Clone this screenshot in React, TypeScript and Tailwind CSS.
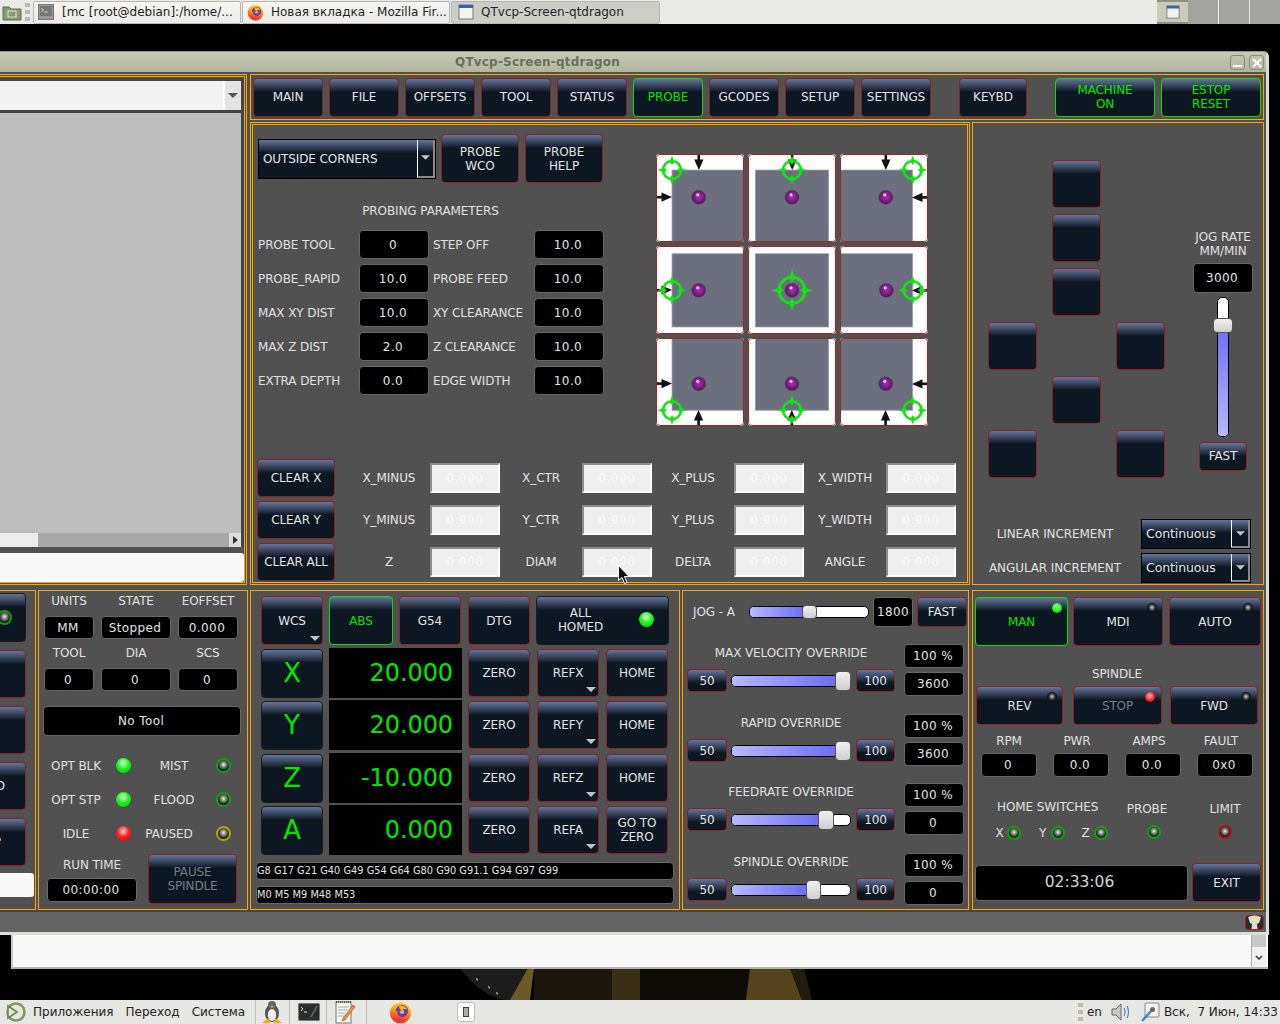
import React from "react";

type P = { className?: string; children?: React.ReactNode };

function Btn({ className = "", children, green, dark }: P & { green?: boolean; dark?: boolean }) {
  const tone = green
    ? "border-[#10d810] text-[#00e800]"
    : dark
    ? "border-[#1c1c1c] text-[#e4e4e4]"
    : "border-[#8c2024] text-[#e4e4e4]";
  return (
    <div
      className={`relative flex shrink-0 items-center justify-center rounded-[4px] border bg-[linear-gradient(#66759a,#0d1722_13px)] text-center text-[12px] leading-[14px] ${tone} ${className}`}
    >
      {children}
    </div>
  );
}

function Field({ className = "", children }: P) {
  return (
    <div
      className={`flex shrink-0 items-center justify-center rounded-[4px] border border-[#686868] bg-black pr-[2px] text-[12px] tracking-[0.4px] text-[#e4e4e4] ${className}`}
    >
      {children}
    </div>
  );
}

function Arrow({ className = "" }: P) {
  return (
    <svg viewBox="0 0 10 5" className={`absolute h-[5px] w-[10px] ${className}`}>
      <polygon points="0,0 10,0 5,5" fill="#c4c4c4" />
    </svg>
  );
}

function Led({ className = "", color = "off", ring = "#0fa00f" }: P & { color?: "off" | "green" | "red"; ring?: string }) {
  const bg =
    color === "green"
      ? "bg-[radial-gradient(circle_at_48%_35%,#d8ffd8,#22f022_45%,#00c400)]"
      : color === "red"
      ? "bg-[radial-gradient(circle_at_48%_35%,#ffd8d8,#ff2020_45%,#d00000)]"
      : "bg-[radial-gradient(circle_at_50%_42%,#f4f4f4,#a0a0a0_22%,#505050_48%,#161616_68%)]";
  return (
    <div
      className={`shrink-0 rounded-full ${color === "off" ? "border-2" : ""} ${bg} ${className}`}
      style={color === "off" ? { borderColor: ring } : undefined}
    />
  );
}

function Panel({ className = "", children }: P) {
  return <div className={`shrink-0 border border-[#ffa500] ${className}`}>{children}</div>;
}

function HSlider({ pos, w = "w-[16px]", h = "h-[20px]" }: { pos: number; w?: string; h?: string }) {
  return (
    <div className="relative h-[12px] w-[120px] shrink-0 rounded-[5px] border border-black bg-white">
      <div className="h-full rounded-[4px] bg-[linear-gradient(90deg,#b8b8ff,#6a6af4)]" style={{ width: pos + 4 }} />
      <div
        className={`absolute top-1/2 -translate-y-1/2 rounded-[4px] border border-[#555] bg-[linear-gradient(#f0f0f0,#cfcfcf)] ${w} ${h}`}
        style={{ left: pos - 1 }}
      />
    </div>
  );
}

function Combo({ className = "", children, small }: P & { small?: boolean }) {
  return (
    <div className={`flex shrink-0 border border-black bg-[linear-gradient(#66759a,#0d1722_13px)] text-[#e4e4e4] ${className}`}>
      <div className="flex flex-1 items-center pl-[4px]">{children}</div>
      <div className={`relative flex items-center justify-center border-b-2 border-l border-r-2 border-b-[#8a8a8a] border-l-white border-r-[#8a8a8a] ${small ? "w-[19px]" : "w-[18px]"}`}>
        <svg viewBox="0 0 10 5" className="h-[5px] w-[9px]">
          <polygon points="0,0 10,0 5,5" fill="#c4c4c4" />
        </svg>
      </div>
    </div>
  );
}

const G = "#12e412";

function ProbeArrow({ x, y, dir }: { x: number; y: number; dir: "d" | "u" | "r" | "l" }) {
  const rot = { d: 0, u: 180, r: -90, l: 90 }[dir];
  return (
    <g transform={`translate(${x} ${y}) rotate(${rot})`}>
      <rect x="-1.2" y="0" width="2.6" height="9" fill="#111" />
      <polygon points="-4.5,5.5 4.8,5.5 0.2,16" fill="#111" />
    </g>
  );
}

function Target({ x, y, big }: { x: number; y: number; big?: boolean }) {
  const r = big ? 13 : 9;
  const o = big ? 21 : 14.5;
  const i = big ? 8 : 5;
  const a = big ? 3.5 : 2.8;
  const t = big ? 2.4 : 2;
  return (
    <g>
      <circle cx={x} cy={y} r={r} fill="none" stroke={G} strokeWidth={big ? 3 : 2.6} />
      <polygon fill={G} points={`${x - a},${y - r} ${x + a},${y - r} ${x},${y - i}`} />
      <polygon fill={G} points={`${x - a},${y + r} ${x + a},${y + r} ${x},${y + i}`} />
      <polygon fill={G} points={`${x - r},${y - a} ${x - r},${y + a} ${x - i},${y}`} />
      <polygon fill={G} points={`${x + r},${y - a} ${x + r},${y + a} ${x + i},${y}`} />
      <polygon fill={G} points={`${x - t},${y - r} ${x + t},${y - r} ${x},${y - o}`} />
      <polygon fill={G} points={`${x - t},${y + r} ${x + t},${y + r} ${x},${y + o}`} />
      <polygon fill={G} points={`${x - r},${y - t} ${x - r},${y + t} ${x - o},${y}`} />
      <polygon fill={G} points={`${x + r},${y - t} ${x + r},${y + t} ${x + o},${y}`} />
    </g>
  );
}

type Cell = {
  rect: [number, number, number, number];
  ball: [number, number];
  target: [number, number];
  big?: boolean;
  arrows: [number, number, "d" | "u" | "r" | "l"][];
};

const cells: Cell[] = [
  { rect: [16, 16, 72, 72], ball: [42.7, 43.3], target: [16, 16], arrows: [[42.7, 0, "d"], [0, 43.3, "r"]] },
  { rect: [7.3, 16, 73.4, 72], ball: [44, 43.3], target: [44, 16], arrows: [[44, 0, "d"]] },
  { rect: [0, 16, 72.7, 72], ball: [45.7, 43.3], target: [72.7, 16], arrows: [[45.7, 0, "d"], [88, 43.3, "l"]] },
  { rect: [16, 7.7, 72, 73.3], ball: [42.7, 44.3], target: [16, 44.3], arrows: [[0, 44.3, "r"]] },
  { rect: [7.3, 7.7, 73.4, 73.3], ball: [44, 44.3], target: [44, 44.3], big: true, arrows: [] },
  { rect: [0, 7.7, 72.7, 73.3], ball: [46.3, 44.3], target: [72.7, 44.3], arrows: [[88, 44.3, "l"]] },
  { rect: [16, 0, 72, 72.3], ball: [42.7, 45.7], target: [16, 72.3], arrows: [[0, 45.7, "r"], [42.7, 88, "u"]] },
  { rect: [7.3, 0, 73.4, 72.3], ball: [44, 45.7], target: [44, 72.3], arrows: [[44, 88, "u"]] },
  { rect: [0, 0, 72.7, 72.3], ball: [45.7, 45.7], target: [72.7, 72.3], arrows: [[88, 45.7, "l"], [45.7, 88, "u"]] },
];

function ProbeCell({ c, i }: { c: Cell; i: number }) {
  const id = `ball${i}`;
  const clip = `clip${i}`;
  return (
    <svg viewBox="0 0 88 88" className="h-[88px] w-[88px]">
      <defs>
        <radialGradient id={id} cx="50%" cy="45%" r="55%">
          <stop offset="0" stopColor="#a83ab0" />
          <stop offset="0.65" stopColor="#7a1a84" />
          <stop offset="1" stopColor="#40204a" />
        </radialGradient>
        <clipPath id={clip}>
          <rect x="0" y="0" width="88" height="88" rx="3" />
        </clipPath>
      </defs>
      <g clipPath={`url(#${clip})`}>
        <rect width="88" height="88" fill="#fff" />
        <rect x={c.rect[0]} y={c.rect[1]} width={c.rect[2]} height={c.rect[3]} fill="#6c707e" stroke="#a4a8b4" strokeWidth="0.8" />
        <circle cx={c.ball[0]} cy={c.ball[1]} r="7" fill={`url(#${id})`} stroke="#4c4c58" strokeWidth="0.6" />
        <circle cx={c.ball[0] - 1} cy={c.ball[1] - 2.5} r="1.5" fill="#f0d0f0" />
        {c.arrows.map((a, k) => (
          <ProbeArrow key={k} x={a[0]} y={a[1]} dir={a[2]} />
        ))}
        <Target x={c.target[0]} y={c.target[1]} big={c.big} />
      </g>
      <rect x="0.5" y="0.5" width="87" height="87" rx="3" fill="none" stroke="#a82020" />
    </svg>
  );
}

function Firefox({ className = "", id }: P & { id: string }) {
  return (
    <svg viewBox="0 0 24 24" className={className}>
      <defs>
        <linearGradient id={id} x1="0.6" y1="0" x2="0.3" y2="1">
          <stop offset="0" stopColor="#ffd81e" />
          <stop offset="0.45" stopColor="#ff8a1a" />
          <stop offset="1" stopColor="#e8263c" />
        </linearGradient>
      </defs>
      <circle cx="12" cy="12.5" r="11" fill={`url(#${id})`} />
      <circle cx="13.5" cy="10.5" r="6.5" fill="#5a40c4" />
      <path d="M3 7 C2 14 6 21 13 21 C18 21 22 17 22 13 C20 16 17 18 13 17 C9 16 8 13 9 11 C7 11 5 9 6 5 C5 5 4 6 3 7 Z" fill={`url(#${id})`} />
      <path d="M11 5 C14 4 18 6 19 9 C17 8 15 8 14 9 C16 10 17 12 15 13 C13 14 11 13 11 11 C12 11 13 10 12 9 C11 8 10 7 11 5 Z" fill="#ffb21e" />
    </svg>
  );
}

function Task({ className = "", children, active }: P & { active?: boolean }) {
  return (
    <div
      className={`flex h-[23px] items-center rounded-[2px] border border-[#b8b8b2] pl-[4px] text-[12px] text-[#222] ${
        active ? "bg-[#cdcdc8]" : "bg-[linear-gradient(#f6f6f3,#ecebe7)]"
      } ${className}`}
    >
      {children}
    </div>
  );
}

function SmallLed({ color = "off", className = "" }: { color?: "off" | "green" | "red"; className?: string }) {
  const bg =
    color === "green"
      ? "bg-[radial-gradient(circle_at_48%_40%,#b0ffb0,#18f018_55%,#00b000)]"
      : color === "red"
      ? "bg-[radial-gradient(circle_at_48%_40%,#ffc0c0,#ff2020_55%,#c00000)]"
      : "bg-[radial-gradient(circle_at_50%_45%,#d0d0d0,#707070_25%,#1a1a1a_50%,#000_100%)]";
  return <div className={`absolute h-[10px] w-[10px] rounded-full ${bg} ${className}`} />;
}

function ProbeRow({ rowIndex, label, items }: { rowIndex: number; label: string; items: string[] }) {
  return (
    <div className="flex items-center">
      <Btn className="h-[38px] w-[78px]">{label}</Btn>
      <div className="ml-[13px] flex">
        {items.map((t) => (
          <div key={`${rowIndex}${t}`} className="flex w-[152px] items-center">
            <div className="w-[82px] text-center text-[12px] text-[#e4e4e4]">{t}</div>
            <div className="flex h-[30px] w-[70px] items-center justify-center border-2 border-b-white border-l-[#8c8c8c] border-r-white border-t-[#8c8c8c] bg-[#efefef] text-[12px] tracking-[0.5px] text-[#fafafa]">
              0.000
            </div>
          </div>
        ))}
      </div>
    </div>
  );
}

function Dro({ axis, value, ref1, last, className = "" }: { axis: string; value: string; ref1: string; last: React.ReactNode; className?: string }) {
  return (
    <div className={`flex h-[50px] items-center ${className}`}>
      <Btn dark className="h-[49px] w-[62px] !text-[26px] !text-[#00e800]">{axis}</Btn>
      <div className="ml-[6px] flex h-[50px] w-[133px] items-center justify-end bg-black pr-[9px] text-[24px] text-[#00e800]">{value}</div>
      <Btn className="ml-[6px] h-[48px] w-[62px]">ZERO</Btn>
      <Btn className="ml-[7px] h-[48px] w-[62px]">
        {ref1}
        <Arrow className="bottom-[4px] right-[2px]" />
      </Btn>
      <Btn className="ml-[7px] h-[48px] w-[62px]">{last}</Btn>
    </div>
  );
}

function Override({ title, a, b, pos, hw = "w-[16px]", className = "" }: { title: string; a: string; b: string; pos: number; hw?: string; className?: string }) {
  return (
    <div className={`flex h-[52px] pl-[4px] ${className}`}>
      <div className="w-[208px]">
        <div className="mt-[1px] h-[16px] text-center text-[12px] leading-[16px] text-[#e0e0e0]">{title}</div>
        <div className="mt-[8px] flex items-center">
          <Btn className="h-[23px] w-[40px]">50</Btn>
          <div className="ml-[4px]">
            <HSlider pos={pos} w={hw} />
          </div>
          <Btn className="ml-[5px] h-[23px] w-[39px]">100</Btn>
        </div>
      </div>
      <div className="ml-[9px] flex w-[60px] flex-col gap-[4px]">
        <Field className="h-[24px] w-[60px]">{a}</Field>
        <Field className="h-[24px] w-[60px]">{b}</Field>
      </div>
    </div>
  );
}

const navs = ["MAIN", "FILE", "OFFSETS", "TOOL", "STATUS", "PROBE", "GCODES", "SETUP", "SETTINGS"];
const params: [string, string, string, string][] = [
  ["PROBE TOOL", "0", "STEP OFF", "10.0"],
  ["PROBE_RAPID", "10.0", "PROBE FEED", "10.0"],
  ["MAX XY DIST", "10.0", "XY CLEARANCE", "10.0"],
  ["MAX Z DIST", "2.0", "Z CLEARANCE", "10.0"],
  ["EXTRA DEPTH", "0.0", "EDGE WIDTH", "10.0"],
];

export default function App() {
  return (
    <div className="relative flex h-[1024px] w-[1280px] flex-col justify-between overflow-hidden bg-black font-['DejaVu_Sans',sans-serif] tracking-[-0.1px]">
      {/* wallpaper fragment */}
      <svg viewBox="0 0 370 32" className="absolute left-[460px] top-[968px] h-[32px] w-[370px]">
        <path d="M0 0 Q20 28 46 32 L50 32 L68 0 Z" fill="#1c1c1c" />
        <path d="M16 10 l2 1 l-1 2 z M28 18 l2 1 l-1 2 z M36 24 l2 1 l-1 2 z" fill="#d8d8d8" />
        <path d="M68 0 L50 32 L70 32 L74 0 Z" fill="#6b5a28" />
        <rect x="74" y="0" width="78" height="32" fill="#1c160c" />
        <rect x="152" y="0" width="28" height="32" fill="#3a3018" />
        <rect x="180" y="0" width="110" height="32" fill="#0e0b07" />
        <path d="M290 0 h40 l12 32 h-56 z" fill="#54441e" />
        <path d="M330 0 h14 l8 32 h-10 z" fill="#211b10" />
      </svg>

      {/* top panel */}
      <div className="flex h-[24px] shrink-0 items-center bg-[#e9e9e5]">
        <svg viewBox="0 0 20 20" className="ml-[2px] h-[20px] w-[20px]">
          <path d="M1 5 h6 l2 2 h10 v11 h-18 z" fill="#8a9a70" stroke="#5e6a4c" />
          <rect x="6" y="9" width="8" height="6" fill="none" stroke="#dfe5d0" />
        </svg>
        <div className="ml-[3px] flex h-[18px] w-[5px] flex-col justify-between">
          <div className="h-[4px] bg-[#b8bca8]" />
          <div className="h-[4px] bg-[#b8bca8]" />
          <div className="h-[4px] bg-[#b8bca8]" />
        </div>
        <Task className="ml-[3px] w-[208px]">
          <svg viewBox="0 0 16 16" className="h-[16px] w-[16px]">
            <rect x="0.5" y="0.5" width="15" height="15" fill="#999" stroke="#777" />
            <rect x="2" y="2" width="12" height="10" fill="#777" />
            <path d="M3.5 4 L5.5 6 L3.5 8 M6.5 8 h3" fill="none" stroke="#eee" strokeWidth="0.8" />
          </svg>
          <span className="ml-[8px] whitespace-nowrap tracking-normal">[mc [root@debian]:/home/...</span>
        </Task>
        <Task className="ml-[1px] w-[208px]">
          <Firefox id="ffa" className="h-[17px] w-[17px]" />
          <span className="ml-[7px] whitespace-nowrap tracking-normal">Новая вкладка - Mozilla Fir...</span>
        </Task>
        <Task active className="ml-[1px] w-[209px]">
          <svg viewBox="0 0 16 16" className="ml-[2px] h-[16px] w-[16px]">
            <rect x="1" y="1" width="14" height="14" fill="#f4f4f0" stroke="#777" />
            <rect x="1" y="1" width="14" height="3" fill="#3a62b0" />
          </svg>
          <span className="ml-[7px] whitespace-nowrap tracking-normal">QTvcp-Screen-qtdragon</span>
        </Task>
        <div className="flex-1" />
        <div className="flex h-[24px] w-[31px] items-center justify-center border-y-2 border-y-[#8f9280] bg-[#c9ccb8]">
          <svg viewBox="0 0 16 16" className="h-[14px] w-[14px]">
            <rect x="1" y="1" width="14" height="14" fill="#f2f2ee" stroke="#777" />
            <rect x="1" y="1" width="14" height="3" fill="#3a62b0" />
          </svg>
        </div>
        <div className="h-[24px] w-[31px] border-r border-r-[#e8e8e8] bg-[#a3a3a0]" />
        <div className="h-[24px] w-[31px] border-r border-r-[#e8e8e8] bg-[#a3a3a0]" />
        <div className="h-[24px] w-[30px] bg-[#a3a3a0]" />
      </div>

      {/* terminal window behind */}
      <div className="absolute left-[11px] top-[933px] flex h-[36px] w-[1257px] justify-end border-b-2 border-l-2 border-b-[#b4b4b0] border-l-[#c8c8c4] bg-[#f8f8f8] pr-[2px]">
        <div className="flex h-full w-[15px] flex-col border-l border-l-[#b0b0b0]">
          <div className="h-[14px] bg-[#c8c8c8]" />
          <div className="flex flex-1 items-center justify-center bg-[#f0f0f0]">
            <svg viewBox="0 0 8 5" className="h-[5px] w-[8px]">
              <path d="M1 1 L4 4 L7 1" fill="none" stroke="#333" strokeWidth="1.5" />
            </svg>
          </div>
        </div>
      </div>

      {/* qtdragon window */}
      <div className="absolute left-[-60px] top-[51px] flex h-[884px] w-[1329px] flex-col overflow-hidden rounded-t-[6px] border-b-[3px] border-r-[3px] border-b-[#dcdcd8] border-r-[#dcdcd8] bg-[#515151]">
        <div className="relative flex h-[21px] shrink-0 items-center border-t border-t-[#8f9280] bg-[linear-gradient(#c6cab4,#b2b69e)] pl-[515px]">
          <div className="text-[12px] font-bold tracking-[0.2px] text-[#6c6f5e]">QTvcp-Screen-qtdragon</div>
          <div className="absolute right-[2px] top-[3px] flex gap-[4px]">
            <div className="flex h-[15px] w-[15px] items-end justify-center rounded-[3px] border border-[#8a8d7a] pb-[2px]">
              <div className="h-[2px] w-[9px] bg-white" />
            </div>
            <div className="flex h-[15px] w-[15px] items-center justify-center rounded-[3px] border border-[#8a8d7a]">
              <svg viewBox="0 0 10 10" className="h-[10px] w-[10px]">
                <path d="M1 1 L9 9 M9 1 L1 9" stroke="#fff" strokeWidth="2" />
              </svg>
            </div>
          </div>
        </div>

        <div className="flex-1 pt-[2px]">
          {/* upper block */}
          <div className="flex h-[511px]">
            <Panel className="h-full w-[307px] p-[1px]">
              <Panel className="flex h-full w-full flex-col">
                <div className="mt-[1px] flex h-[469px] flex-col border-[3px] border-b-0 border-[#444]">
                  <div className="flex h-[29px] shrink-0 justify-end bg-[#f2f2f2]">
                    <div className="flex w-[18px] items-center justify-center border-l-2 border-l-white bg-[#e4e4e4]">
                      <svg viewBox="0 0 10 5" className="h-[5px] w-[10px]">
                        <polygon points="0,0 10,0 5,5" fill="#555" />
                      </svg>
                    </div>
                  </div>
                  <div className="h-[3px] shrink-0 bg-[#444]" />
                  <div className="flex-1 bg-[#bdbdbd]" />
                  <div className="flex h-[14px] shrink-0">
                    <div className="w-[92px] bg-[#ececec]" />
                    <div className="flex-1 bg-[#a8a8a8]" />
                    <div className="flex w-[12px] items-center justify-center bg-[#dedede]">
                      <svg viewBox="0 0 5 8" className="h-[8px] w-[5px]">
                        <polygon points="0,0 5,4 0,8" fill="#333" />
                      </svg>
                    </div>
                  </div>
                </div>
                <div className="mt-[6px] h-[29px] rounded-[3px] bg-[#f8f8f8]" />
              </Panel>
            </Panel>

            <div className="ml-[3px] w-[1014px]">
              <Panel className="flex h-[46px] w-full items-center pl-[2px]">
                <div className="flex gap-[6px]">
                  {navs.map((n) => (
                    <Btn key={n} green={n === "PROBE"} className="h-[39px] w-[70px]">
                      {n}
                    </Btn>
                  ))}
                </div>
                <Btn className="ml-[28px] h-[39px] w-[68px]">KEYBD</Btn>
                <Btn green className="ml-[28px] h-[39px] w-[100px]">
                  MACHINE
                  <br />
                  ON
                </Btn>
                <Btn green className="ml-[6px] h-[39px] w-[100px]">
                  ESTOP
                  <br />
                  RESET
                </Btn>
              </Panel>

              <div className="mt-[2px] flex h-[463px]">
                {/* probe */}
                <Panel className="h-full w-[720px] p-[1px]">
                  <Panel className="h-full w-full">
                    <div className="flex h-[334px] pl-[5px]">
                      <div className="w-[345px] pt-[9px]">
                        <div className="flex h-[49px] items-center">
                          <Combo className="h-[40px] w-[178px] text-[12px]">OUTSIDE CORNERS</Combo>
                          <Btn className="ml-[5px] h-[49px] w-[78px]">
                            PROBE
                            <br />
                            WCO
                          </Btn>
                          <Btn className="ml-[6px] h-[49px] w-[78px]">
                            PROBE
                            <br />
                            HELP
                          </Btn>
                        </div>
                        <div className="mt-[20px] h-[16px] text-center text-[12px] leading-[16px] text-[#e0e0e0]">PROBING PARAMETERS</div>
                        <div className="mt-[11px] grid grid-cols-[101px_70px_105px_70px] gap-y-[5px]">
                          {params.map((p) => (
                            <React.Fragment key={p[0]}>
                              <div className="flex h-[29px] items-center text-[12px] text-[#e0e0e0]">{p[0]}</div>
                              <Field className="h-[29px] w-[70px]">{p[1]}</Field>
                              <div className="flex h-[29px] items-center pl-[4px] text-[12px] text-[#e0e0e0]">{p[2]}</div>
                              <Field className="h-[29px] w-[70px]">{p[3]}</Field>
                            </React.Fragment>
                          ))}
                        </div>
                      </div>
                      <div className="ml-[53px] pt-[29px]">
                        <div className="grid grid-cols-[88px_88px_88px] gap-[4px]">
                          {cells.map((c, i) => (
                            <ProbeCell key={i} c={c} i={i} />
                          ))}
                        </div>
                      </div>
                    </div>
                    <div className="flex flex-col gap-[4px] pl-[4px]">
                      <ProbeRow rowIndex={0} label="CLEAR X" items={["X_MINUS", "X_CTR", "X_PLUS", "X_WIDTH"]} />
                      <ProbeRow rowIndex={1} label="CLEAR Y" items={["Y_MINUS", "Y_CTR", "Y_PLUS", "Y_WIDTH"]} />
                      <ProbeRow rowIndex={2} label="CLEAR ALL" items={["Z", "DIAM", "DELTA", "ANGLE"]} />
                    </div>
                  </Panel>
                </Panel>

                {/* jog */}
                <Panel className="ml-[2px] h-full w-[292px]">
                  <div className="flex h-[396px]">
                    <div className="ml-[15px] mt-[37px] grid h-[318px] grid-cols-[49px_49px_49px] grid-rows-[repeat(6,48px)] gap-x-[15px] gap-y-[6px]">
                      <Btn className="col-start-2 row-start-1 h-[48px] w-[49px]" />
                      <Btn className="col-start-2 row-start-2 h-[48px] w-[49px]" />
                      <Btn className="col-start-2 row-start-3 h-[48px] w-[49px]" />
                      <Btn className="col-start-1 row-start-4 h-[48px] w-[49px]" />
                      <Btn className="col-start-3 row-start-4 h-[48px] w-[49px]" />
                      <Btn className="col-start-2 row-start-5 h-[48px] w-[49px]" />
                      <Btn className="col-start-1 row-start-6 h-[48px] w-[49px]" />
                      <Btn className="col-start-3 row-start-6 h-[48px] w-[49px]" />
                    </div>
                    <div className="ml-[28px] flex w-[60px] flex-col items-center pt-[107px]">
                      <div className="whitespace-nowrap text-center text-[12px] leading-[14px] text-[#e0e0e0]">
                        JOG RATE
                        <br />
                        MM/MIN
                      </div>
                      <Field className="mt-[5px] h-[30px] w-[60px]">3000</Field>
                      <div className="relative mt-[4px] flex h-[140px] w-[12px] flex-col justify-end rounded-[5px] border border-black bg-white">
                        <div className="h-[116px] rounded-b-[4px] bg-[linear-gradient(#6a6af4,#b8b8ff)]" />
                        <div className="absolute left-[-5px] top-[20px] h-[15px] w-[20px] rounded-[4px] border border-[#555] bg-[linear-gradient(#f0f0f0,#cfcfcf)]" />
                      </div>
                      <Btn className="mt-[5px] h-[29px] w-[48px] pb-[1px]">FAST</Btn>
                    </div>
                  </div>
                  <div className="flex flex-col gap-[4px]">
                    {["LINEAR INCREMENT", "ANGULAR INCREMENT"].map((t) => (
                      <div key={t} className="flex items-center">
                        <div className="w-[164px] whitespace-nowrap text-center text-[12px] text-[#e0e0e0]">{t}</div>
                        <Combo small className="ml-[4px] h-[30px] w-[110px] text-[12.5px]">Continuous</Combo>
                      </div>
                    ))}
                  </div>
                </Panel>
              </div>
            </div>
          </div>

          {/* lower block */}
          <div className="mt-[5px] flex h-[320px]">
            <Panel className="flex h-full w-[96px] flex-col items-end pr-[1px] pt-[2px]">
              <Btn dark className="mr-[8px] h-[49px] w-[80px]">
                <Led className="absolute right-[13px] top-[16px] h-[15px] w-[15px]" />
              </Btn>
              <Btn className="mr-[8px] mt-[8px] h-[48px] w-[80px]" />
              <Btn className="mr-[8px] mt-[8px] h-[48px] w-[80px]" />
              <Btn className="mr-[8px] mt-[8px] h-[48px] w-[80px] !justify-end pr-[20px]">LOAD</Btn>
              <Btn className="mr-[8px] mt-[8px] h-[48px] w-[80px] !justify-end pr-[24px]">STEP</Btn>
              <div className="mt-[7px] h-[24px] w-[80px] rounded-[3px] bg-[#f8f8f8]" />
            </Panel>

            <Panel className="ml-[2px] h-full w-[210px] pt-[2px]">
              <div className="grid grid-cols-[50px_70px_60px] gap-x-[7px] pl-[5px] text-center text-[12px] text-[#e0e0e0]">
                <div className="h-[16px] leading-[16px]">UNITS</div>
                <div className="h-[16px] leading-[16px]">STATE</div>
                <div className="h-[16px] leading-[16px]">EOFFSET</div>
                <Field className="mt-[7px] h-[23px] w-[50px]">MM</Field>
                <Field className="mt-[7px] h-[23px] w-[70px]">Stopped</Field>
                <Field className="mt-[7px] h-[23px] w-[60px]">0.000</Field>
                <div className="mt-[6px] h-[16px] leading-[16px]">TOOL</div>
                <div className="mt-[6px] h-[16px] leading-[16px]">DIA</div>
                <div className="mt-[6px] h-[16px] leading-[16px]">SCS</div>
                <Field className="mt-[7px] h-[23px] w-[50px]">0</Field>
                <Field className="mt-[7px] h-[23px] w-[70px]">0</Field>
                <Field className="mt-[7px] h-[23px] w-[60px]">0</Field>
              </div>
              <Field className="ml-[4px] mt-[15px] h-[30px] w-[198px]">No Tool</Field>
              <div className="mt-[20px] flex flex-col gap-[16px] text-[12px] text-[#e0e0e0]">
                {[
                  { a: "OPT BLK", c: "green", b: "MIST", ring: "#0fa00f", pr: "" },
                  { a: "OPT STP", c: "green", b: "FLOOD", ring: "#0fa00f", pr: "" },
                  { a: "IDLE", c: "red", b: "PAUSED", ring: "#b4a800", pr: "pr-[10px]" },
                ].map((r) => (
                  <div key={r.a} className="flex h-[18px] items-center">
                    <div className="mt-[1px] w-[74px] text-center">{r.a}</div>
                    <Led color={r.c as "green" | "red"} className="ml-[3px] h-[15px] w-[15px]" />
                    <div className={`ml-[13px] mt-[1px] w-[60px] whitespace-nowrap text-center ${r.pr}`}>{r.b}</div>
                    <Led ring={r.ring} className="ml-[12px] h-[15px] w-[15px]" />
                  </div>
                ))}
              </div>
              <div className="ml-[8px] mt-[12px] flex">
                <div className="w-[90px] pt-[3px]">
                  <div className="h-[16px] text-center text-[12px] leading-[16px] text-[#e0e0e0]">RUN TIME</div>
                  <Field className="mt-[5px] h-[24px] w-[90px]">00:00:00</Field>
                </div>
                <Btn className="ml-[11px] h-[50px] w-[89px] !text-[#767b82]">
                  PAUSE
                  <br />
                  SPINDLE
                </Btn>
              </div>
            </Panel>

            <Panel className="ml-[2px] h-full w-[430px] pl-[10px] pt-[5px]">
              <div className="flex">
                <Btn className="h-[49px] w-[62px]">
                  WCS
                  <Arrow className="bottom-[3px] right-[2px]" />
                </Btn>
                <Btn green className="ml-[6px] h-[49px] w-[64px]">ABS</Btn>
                <Btn className="ml-[6px] h-[49px] w-[62px]">G54</Btn>
                <Btn className="ml-[7px] h-[49px] w-[62px]">DTG</Btn>
                <Btn dark className="ml-[6px] h-[49px] w-[133px] pb-[2px] pr-[44px]">
                  ALL
                  <br />
                  HOMED
                  <Led color="green" className="absolute right-[14px] top-[15px] h-[15px] w-[15px]" />
                </Btn>
              </div>
              <div className="mt-[3px]">
                <Dro axis="X" value="20.000" ref1="REFX" last="HOME" />
                <Dro axis="Y" value="20.000" ref1="REFY" last="HOME" className="mt-[2px]" />
                <Dro axis="Z" value="-10.000" ref1="REFZ" last="HOME" className="mt-[3px]" />
                <Dro
                  axis="A"
                  value="0.000"
                  ref1="REFA"
                  className="mt-[2px]"
                  last={
                    <>
                      GO TO
                      <br />
                      ZERO
                    </>
                  }
                />
              </div>
              <div className="-ml-[5px] mt-[7px] flex h-[18px] w-[418px] items-center rounded-[4px] border border-[#686868] bg-black text-[9.8px] tracking-normal text-[#e4e4e4]">
                G8 G17 G21 G40 G49 G54 G64 G80 G90 G91.1 G94 G97 G99
              </div>
              <div className="-ml-[5px] mt-[6px] flex h-[18px] w-[418px] items-center rounded-[4px] border border-[#686868] bg-black text-[9.8px] tracking-normal text-[#e4e4e4]">
                M0 M5 M9 M48 M53
              </div>
            </Panel>

            <Panel className="ml-[2px] h-full w-[287px] pt-[6px]">
              <div className="flex h-[30px] items-center pl-[10px]">
                <div className="w-[56px] text-[12px] text-[#e0e0e0]">JOG - A</div>
                <HSlider pos={53} w="w-[15px]" h="h-[14px]" />
                <Field className="ml-[4px] h-[30px] w-[40px] !pr-0">1800</Field>
                <Btn className="ml-[4px] h-[30px] w-[50px]">FAST</Btn>
              </div>
              <Override className="mt-[17px]" title="MAX VELOCITY OVERRIDE" a="100 %" b="3600" pos={104} />
              <Override className="mt-[18px]" title="RAPID OVERRIDE" a="100 %" b="3600" pos={104} />
              <Override className="mt-[17px]" title="FEEDRATE OVERRIDE" a="100 %" b="0" pos={87} />
              <Override className="mt-[18px]" title="SPINDLE OVERRIDE" a="100 %" b="0" pos={75} hw="w-[15px]" />
            </Panel>

            <Panel className="ml-[3px] h-full w-[292px] pt-[6px] text-[12px] text-[#e0e0e0]">
              <div className="flex pl-[2px]">
                <Btn green className="h-[49px] w-[93px]">
                  MAN
                  <SmallLed color="green" className="right-[5px] top-[5px]" />
                </Btn>
                <Btn className="ml-[5px] h-[49px] w-[90px]">
                  MDI
                  <SmallLed className="right-[5px] top-[5px]" />
                </Btn>
                <Btn className="ml-[6px] h-[49px] w-[92px]">
                  AUTO
                  <SmallLed className="right-[7px] top-[5px]" />
                </Btn>
              </div>
              <div className="mt-[20px] h-[16px] w-[288px] text-center leading-[16px]">SPINDLE</div>
              <div className="mt-[4px] flex pl-[3px]">
                <Btn className="h-[39px] w-[87px]">
                  REV
                  <SmallLed className="right-[5px] top-[5px]" />
                </Btn>
                <Btn className="ml-[10px] h-[39px] w-[89px] !text-[#767b82]">
                  STOP
                  <SmallLed color="red" className="right-[6px] top-[5px]" />
                </Btn>
                <Btn className="ml-[8px] h-[39px] w-[88px]">
                  FWD
                  <SmallLed className="right-[6px] top-[5px]" />
                </Btn>
              </div>
              <div className="mt-[8px] grid grid-cols-[56px_56px_56px_56px] gap-x-[16px] pl-[8px] text-center">
                <div className="h-[16px] leading-[16px]">RPM</div>
                <div className="h-[16px] pr-[8px] leading-[16px]">PWR</div>
                <div className="h-[16px] pr-[8px] leading-[16px]">AMPS</div>
                <div className="h-[16px] pr-[8px] leading-[16px]">FAULT</div>
                <Field className="mt-[4px] h-[24px] w-[56px]">0</Field>
                <Field className="mt-[4px] h-[24px] w-[56px]">0.0</Field>
                <Field className="mt-[4px] h-[24px] w-[56px]">0.0</Field>
                <Field className="mt-[4px] h-[24px] w-[56px]">0x0</Field>
              </div>
              <div className="mt-[22px] flex h-[40px]">
                <div className="w-[144px] pl-[24px]">
                  <div className="h-[16px] whitespace-nowrap leading-[16px]">HOME SWITCHES</div>
                  <div className="-ml-[2px] mt-[9px] flex items-center">
                    <span className="w-[9px] text-center">X</span>
                    <Led className="ml-[3px] h-[14px] w-[14px]" />
                    <span className="ml-[17px] w-[9px] text-center">Y</span>
                    <Led className="ml-[4px] h-[14px] w-[14px]" />
                    <span className="ml-[16px] w-[9px] text-center">Z</span>
                    <Led className="ml-[4px] h-[14px] w-[14px]" />
                  </div>
                </div>
                <div className="flex w-[60px] flex-col items-center pt-[2px]">
                  <div className="h-[16px] leading-[16px]">PROBE</div>
                  <Led className="ml-[14px] mt-[8px] h-[14px] w-[14px]" />
                </div>
                <div className="ml-[18px] flex w-[60px] flex-col items-center pt-[2px]">
                  <div className="h-[16px] leading-[16px]">LIMIT</div>
                  <Led ring="#b01010" className="mt-[8px] h-[14px] w-[14px]" />
                </div>
              </div>
              <div className="mt-[24px] flex items-center pl-[2px]">
                <Field className="h-[36px] w-[213px] !pr-[4px] !text-[15.5px] !tracking-normal !text-[#d4d4d4]">02:33:06</Field>
                <Btn className="ml-[4px] h-[39px] w-[69px]">EXIT</Btn>
              </div>
            </Panel>
          </div>
        </div>

        {/* status bar */}
        <div className="flex h-[22px] shrink-0 items-end justify-end border-t-2 border-t-[#464646] bg-[#636363] pr-[2px]">
          <svg viewBox="0 0 19 15" className="mb-[2px] h-[15px] w-[19px]">
            <rect x="0.5" y="0.5" width="18" height="14" rx="3" fill="#2a2a2a" stroke="#a02020" />
            <path d="M3 2 Q9.5 -1 16 2 L14 8 L12 9 L12.5 14 L6.5 14 L7 9 L5 8 Z" fill="#dcdcdc" />
            <circle cx="9.5" cy="4.5" r="2.4" fill="#f4e870" />
          </svg>
        </div>
      </div>

      {/* mouse pointer */}
      <svg viewBox="0 0 13 20" className="absolute left-[618px] top-[565px] h-[20px] w-[13px]">
        <path d="M0.5 0.5 L0.5 15.5 L4 12.5 L6.5 18.5 L9 17.5 L6.5 11.5 L11 11.5 Z" fill="#111" stroke="#fff" strokeWidth="1" />
      </svg>

      {/* bottom panel */}
      <div className="flex h-[24px] shrink-0 items-center bg-[#e6e6e2] text-[12px] tracking-normal text-[#222]">
        <svg viewBox="0 0 20 20" className="ml-[6px] h-[20px] w-[20px]">
          <circle cx="10" cy="10" r="8.5" fill="none" stroke="#7a9a5a" strokeWidth="2.5" />
          <path d="M2 4 L11 10 L2 16 Z" fill="#e6e6e2" stroke="#6a8a50" strokeWidth="1.6" />
        </svg>
        <span className="ml-[7px]">Приложения</span>
        <span className="ml-[12px]">Переход</span>
        <span className="ml-[12px]">Система</span>
        <div className="ml-[10px] h-[24px] w-px bg-[#bdbdb8]" />
        <svg viewBox="0 0 20 24" className="ml-[6px] h-[24px] w-[20px]">
          <ellipse cx="10" cy="13" rx="7" ry="9" fill="#555" />
          <ellipse cx="10" cy="15" rx="4.2" ry="6" fill="#eee" />
          <circle cx="10" cy="5" r="4" fill="#666" />
          <path d="M0 23 L7 18 L8 23.5 Z M20 23 L13 18 L12 23.5 Z" fill="#f0b000" />
          <path d="M8 6 h4 l-2 2 z" fill="#f0b000" />
        </svg>
        <div className="ml-[7px] h-[24px] w-px bg-[#bdbdb8]" />
        <svg viewBox="0 0 22 18" className="ml-[8px] h-[18px] w-[22px]">
          <rect x="0.5" y="0.5" width="21" height="17" rx="1" fill="#2a2e2c" stroke="#777" />
          <path d="M3 4 L5 6 L3 8 M6 9 h3" stroke="#eee" fill="none" />
          <path d="M12 14 L18 3 L20 3 L14 14 Z" fill="#5a6460" />
        </svg>
        <div className="ml-[6px] h-[24px] w-px bg-[#bdbdb8]" />
        <svg viewBox="0 0 22 24" className="ml-[7px] h-[24px] w-[22px]">
          <rect x="2" y="2" width="15" height="21" fill="#f6f6f0" stroke="#777" />
          <path d="M4 7 h11 M4 10 h9 M4 13 h7 M4 16 h6" stroke="#aaa" />
          <path d="M2 2 h15" stroke="#555" strokeWidth="2" strokeDasharray="1 1" />
          <path d="M9 18 L19 5 L21 7 L11 20 L8 21 Z" fill="#f09030" stroke="#904010" strokeWidth="0.5" />
          <path d="M19 5 L21 7 L20.5 7.6 L18.5 5.6 Z" fill="#d03030" />
        </svg>
        <div className="ml-[10px] h-[24px] w-px bg-[#bdbdb8]" />
        <Firefox id="ffb" className="ml-[22px] h-[23px] w-[23px]" />
        <div className="ml-[45px] flex h-[20px] w-[18px] items-center justify-center rounded-[3px] border border-[#bdbdb8] bg-white">
          <div className="h-[10px] w-[6px] border border-[#444] bg-[#aaa]" />
        </div>
        <div className="flex-1" />
        <div className="flex h-[18px] w-[5px] flex-col justify-between">
          <div className="h-[4px] bg-[#b8bca8]" />
          <div className="h-[4px] bg-[#b8bca8]" />
          <div className="h-[4px] bg-[#b8bca8]" />
        </div>
        <span className="ml-[4px]">en</span>
        <svg viewBox="0 0 20 18" className="ml-[9px] h-[18px] w-[20px]">
          <path d="M1 6 h4 l5-5 v16 l-5-5 h-4 z" fill="#c8c8c4" stroke="#666" />
          <path d="M13 5 Q15 9 13 13 M16 3 Q19 9 16 15" fill="none" stroke="#5a80c0" strokeWidth="1.2" />
        </svg>
        <svg viewBox="0 0 20 20" className="ml-[9px] h-[20px] w-[20px]">
          <rect x="5" y="1" width="14" height="14" rx="1" fill="#f2f2ee" stroke="#888" />
          <path d="M2 19 L12 8" stroke="#4a7ec4" strokeWidth="2.4" />
          <circle cx="12.5" cy="7.5" r="2.5" fill="#666" />
        </svg>
        <span className="ml-[4px] whitespace-pre pr-[2px]">Вск,  7 Июн, 14:33</span>
      </div>
    </div>
  );
}
